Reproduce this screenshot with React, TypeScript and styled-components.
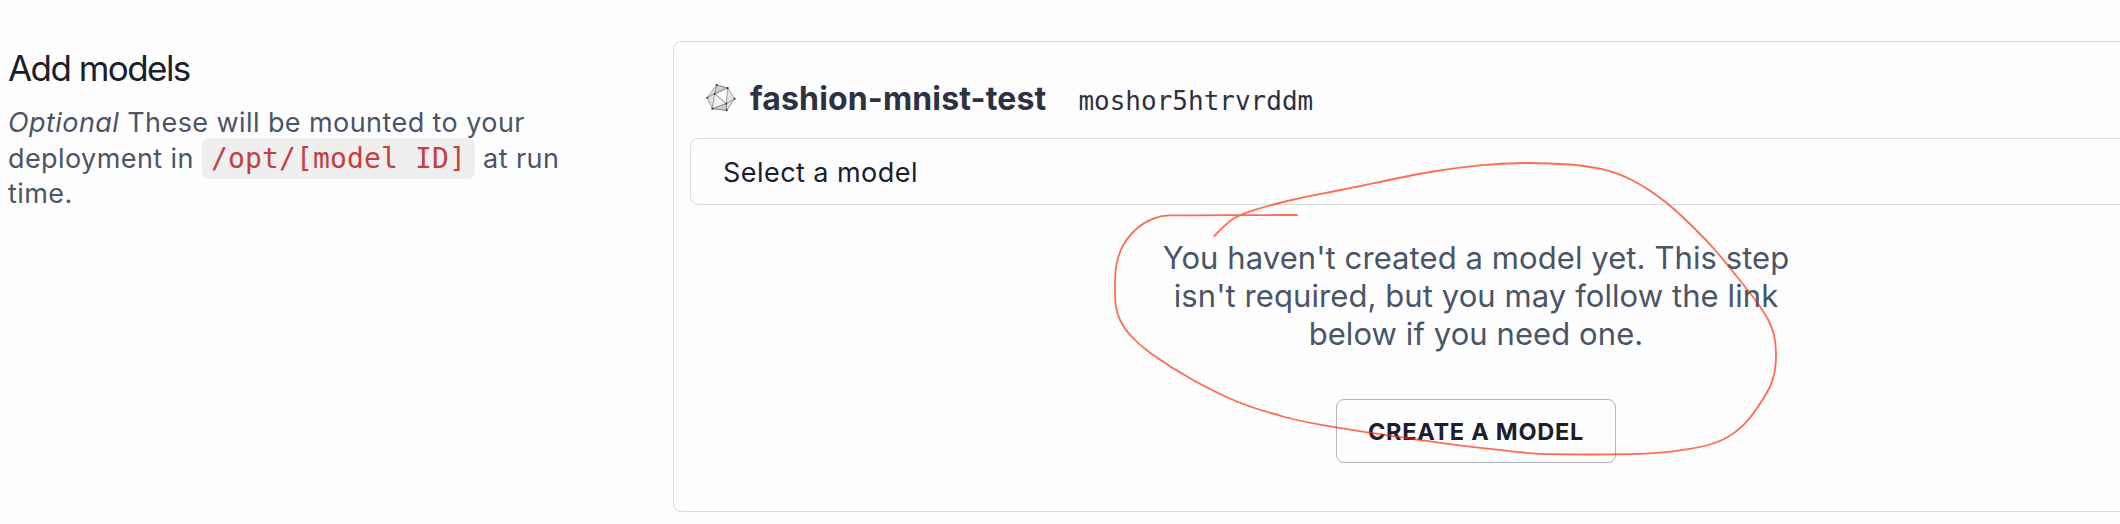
import React from "react";
import styled, { createGlobalStyle } from "styled-components";

const GlobalStyle = createGlobalStyle`
  *, *::before, *::after { box-sizing: border-box; }
  body { margin: 0; background: #fefefe; font-family: Inter, "Liberation Sans", sans-serif; }
`;

const Page = styled.main`
  position: relative;
  display: flex;
  align-items: flex-start;
  height: 524px;
  overflow: hidden;
  background: #fefefe;
`;

const Intro = styled.section`
  flex: 0 0 673px;
  padding: 44px 90px 0 8px;
`;

const Heading = styled.h2`
  margin: 0;
  font-size: 35px;
  line-height: 48px;
  font-weight: 400;
  letter-spacing: -1.55px;
  color: #1a202c;
`;

const Description = styled.p`
  margin: 13px 0 0;
  font-size: 27px;
  line-height: 35.5px;
  letter-spacing: 0.42px;
  color: #4a5568;
  white-space: nowrap;
`;

const Code = styled.code`
  padding: 4px 9px;
  border-radius: 8px;
  background: #efefef;
  color: #c53f3f;
  font-family: "DejaVu Sans Mono", monospace;
  font-size: 28px;
  letter-spacing: 0.15px;
`;

const Card = styled.section`
  flex: 0 0 1606px;
  height: 471px;
  margin-top: 41px;
  padding: 0 16px;
  border: 1px solid #dadbdc;
  border-radius: 8px;
`;

const CardHeader = styled.header`
  display: flex;
  align-items: baseline;
  height: 96px;
  padding: 37px 0 0 16px;
  color: #2d3142;
`;

const ProjectName = styled.h3`
  margin: 0 0 0 14px;
  font-size: 32px;
  line-height: 40px;
  font-weight: 700;
  letter-spacing: 0.15px;
`;

const ProjectId = styled.span`
  margin-left: 32px;
  font-family: "DejaVu Sans Mono", monospace;
  font-size: 26px;
`;

const Select = styled.div`
  display: flex;
  align-items: center;
  height: 67px;
  padding: 1px 32px 0;
  border: 1px solid #dadbdc;
  border-radius: 8px;
  color: #1a202c;
  font-size: 27px;
  letter-spacing: 0.45px;
`;

const EmptyState = styled.div`
  display: flex;
  flex-direction: column;
  align-items: center;
  padding-top: 34px;
`;

const Message = styled.p`
  margin: 0;
  color: #4a5568;
  font-size: 31px;
  line-height: 38px;
  letter-spacing: 0.08px;
  text-align: center;
  white-space: nowrap;
`;

const CreateButton = styled.button`
  width: 280px;
  height: 64px;
  margin-top: 46px;
  padding: 1px 0 0;
  border: 1px solid #b2b5c0;
  border-radius: 8px;
  background: transparent;
  color: #1a202c;
  font-family: Inter, sans-serif;
  font-size: 23.5px;
  font-weight: 700;
  letter-spacing: 0.75px;
`;

const Annotation = styled.svg`
  position: absolute;
  inset: 0;
  pointer-events: none;
`;

const ModelIcon = styled.svg`
  flex: none;
  align-self: flex-start;
  margin-top: 4px;
`;

function Polyhedron() {
  const nodes = [[10.7, 2], [21.7, 5], [28.7, 15.7], [20.7, 27.3], [6.3, 25.7], [1.3, 14.7], [8.7, 10.7], [20.3, 20.7]];
  return (
    <ModelIcon width="30" height="30" viewBox="0 0 30 30" fill="none" stroke="#777" strokeWidth="0.7">
      <path d="M10.7 2 21.7 5 28.7 15.7 20.7 27.3 6.3 25.7 1.3 14.7Z" fill="#e2e2e2" />
      <path d="M8.7 10.7 21.7 5 20.3 20.7Z" fill="#fcfcfc" />
      <path d="M8.7 10.7 20.3 20.7 6.3 25.7Z" fill="#f2f2f2" />
      <path d="M10.7 2 21.7 5 8.7 10.7Z" fill="#cecece" />
      <path d="M6.3 25.7 20.3 20.7 20.7 27.3Z" fill="#cecece" />
      <path d="M1.3 14.7 8.7 10.7M28.7 15.7 20.3 20.7" />
      {nodes.map(([x, y]) => <circle key={`${x}-${y}`} cx={x} cy={y} r="1" fill="#333" stroke="none" />)}
    </ModelIcon>
  );
}

const strokePoints = [
  [1297, 215], [1170, 215.3], [1153.3, 218.7], [1136.7, 228.7], [1123.3, 245], [1116.7, 263.3],
  [1115, 283.3], [1115.7, 305], [1120, 320], [1130, 335], [1150, 352.7], [1191.7, 379.3],
  [1238, 402], [1283, 416.5], [1320, 424.7], [1370, 432.7], [1420, 440], [1470, 446.7],
  [1523.3, 452.5], [1552, 454.2], [1630, 454.2], [1660, 452.7], [1686.7, 449.3], [1708.3, 445],
  [1726.7, 437.7], [1741.7, 426.7], [1755, 411], [1769.3, 388], [1774.6, 372], [1776, 353.3],
  [1774, 335], [1768.3, 320], [1757.3, 302.7], [1740, 280.5], [1715, 250], [1690, 224],
  [1668.3, 204.3], [1650, 190.7], [1633.3, 180.7], [1616.7, 173.3], [1600, 168.7], [1570, 164.5],
  [1524, 163], [1479.5, 165.3], [1430, 172], [1341, 190], [1291.7, 200], [1250, 211.3],
  [1235, 217.7], [1225, 225.3], [1214.3, 236],
];

/** Joins the points of a hand-drawn stroke with smooth cubic segments. */
function smoothPath(points: number[][]) {
  const tangent = (i: number) => {
    const a = points[Math.max(0, i - 1)];
    const b = points[Math.min(points.length - 1, i + 1)];
    const length = Math.hypot(b[0] - a[0], b[1] - a[1]);
    return [(b[0] - a[0]) / length, (b[1] - a[1]) / length];
  };
  return points.slice(1).reduce((path, p, i) => {
    const q = points[i];
    const reach = Math.hypot(p[0] - q[0], p[1] - q[1]) / 3;
    const s = i <= 1 ? [-1, 0] : tangent(i);
    const e = i === 0 ? [-1, 0] : tangent(i + 1);
    return `${path}C${q[0] + s[0] * reach} ${q[1] + s[1] * reach} ${p[0] - e[0] * reach} ${p[1] - e[1] * reach} ${p[0]} ${p[1]}`;
  }, `M${points[0][0]} ${points[0][1]}`);
}

export default function App() {
  return (
    <>
      <GlobalStyle />
      <Page>
        <Intro>
          <Heading>Add models</Heading>
          <Description>
            <em>Optional</em> These will be mounted to your
            <br />
            deployment in <Code>/opt/[model ID]</Code> at run
            <br />
            time.
          </Description>
        </Intro>
        <Card>
          <CardHeader>
            <Polyhedron />
            <ProjectName>fashion-mnist-test</ProjectName>
            <ProjectId>moshor5htrvrddm</ProjectId>
          </CardHeader>
          <Select>Select a model</Select>
          <EmptyState>
            <Message>
              You haven't created a model yet. This step
              <br />
              isn't required, but you may follow the link
              <br />
              below if you need one.
            </Message>
            <CreateButton>CREATE A MODEL</CreateButton>
          </EmptyState>
        </Card>
        <Annotation width="2120" height="524" viewBox="0 0 2120 524" fill="none">
          <path d={smoothPath(strokePoints)} stroke="#ff2600" strokeOpacity="0.68" strokeWidth="1.8" strokeLinecap="round" />
        </Annotation>
      </Page>
    </>
  );
}
